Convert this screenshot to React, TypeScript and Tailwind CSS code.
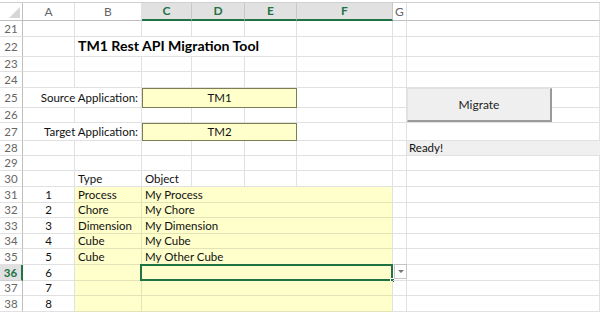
import React from 'react';

const GRID = 'grid grid-cols-[23px_52px_67px_50px_53px_52px_96px_14px_1fr]';
const CELL = 'border-r border-b border-[#e1e1e1]';
const YEL = 'bg-[#ffffcc] border-r border-b border-[#e3e3b8]';

const RowHead: React.FC<{ n: number; active?: boolean }> = ({ n, active }) => (
  <div
    className={`flex items-center justify-center border-b text-[11.5px] ${
      active
        ? 'bg-[#e1e1e1] border-r-2 border-r-[#217346] border-b-[#d0d0d0] text-[#217346] font-bold'
        : 'bg-white border-r border-r-[#bfbfbf] border-b-[#e1e1e1] text-[#666]'
    }`}
  >
    {n}
  </div>
);

const Empty: React.FC<{ span?: string }> = ({ span = '' }) => <div className={`${CELL} ${span}`} />;

const Row: React.FC<{ n: number; h: string; active?: boolean; children?: React.ReactNode }> = ({ n, h, active, children }) => (
  <div className={`${GRID} ${h}`}>
    <RowHead n={n} active={active} />
    {children}
  </div>
);

const Blank: React.FC<{ n: number; h: string }> = ({ n, h }) => (
  <Row n={n} h={h}>
    {Array.from({ length: 8 }).map((_, i) => (
      <Empty key={i} />
    ))}
  </Row>
);

const items = [
  { n: 31, no: '1', type: 'Process', obj: 'My Process', h: 'h-[16px]' },
  { n: 32, no: '2', type: 'Chore', obj: 'My Chore', h: 'h-[15px]' },
  { n: 33, no: '3', type: 'Dimension', obj: 'My Dimension', h: 'h-[16px]' },
  { n: 34, no: '4', type: 'Cube', obj: 'My Cube', h: 'h-[15px]' },
  { n: 35, no: '5', type: 'Cube', obj: 'My Other Cube', h: 'h-[16px]' },
  { n: 36, no: '6', type: '', obj: '', h: 'h-[16px]' },
  { n: 37, no: '7', type: '', obj: '', h: 'h-[15px]' },
  { n: 38, no: '8', type: '', obj: '', h: 'h-[16px]' },
];

const headers = ['A', 'B', 'C', 'D', 'E', 'F', 'G', ''];

export default function App() {
  return (
    <div className="w-[600px] h-[312px] overflow-hidden bg-white font-[family-name:Lato,sans-serif] text-[11.5px] text-[#111] leading-none relative">
      <div className="h-[3px] border-b border-[#d0d0d0]" />

      {/* column headers */}
      <div className={`${GRID} h-[18px]`}>
        <div className="relative bg-white border-r border-b border-[#bfbfbf]">
          <div className="absolute right-[2px] bottom-[2px] w-0 h-0 border-l-[11px] border-l-transparent border-b-[11px] border-b-[#d6d6d6]" />
        </div>
        {headers.map((c, i) => {
          const on = i >= 2 && i <= 5;
          return (
            <div
              key={i}
              className={`flex items-center justify-center border-r text-[12px] ${
                on
                  ? 'bg-[#e1e1e1] border-r-[#c8c8c8] border-b-2 border-b-[#217346] text-[#217346] font-bold'
                  : 'bg-white border-r-[#e1e1e1] border-b border-b-[#bfbfbf] text-[#666]'
              }`}
            >
              {c}
            </div>
          );
        })}
      </div>

      <Blank n={21} h="h-[16px]" />

      <Row n={22} h="h-[20px]">
        <Empty />
        <div className={`${CELL} col-span-4 flex items-center pl-[3px] text-[14.1px] font-bold text-black whitespace-nowrap`}>
          TM1 Rest API Migration Tool
        </div>
        <Empty />
        <Empty />
        <Empty />
      </Row>

      <Blank n={23} h="h-[15px]" />
      <Blank n={24} h="h-[16px]" />

      <Row n={25} h="h-[20px]">
        <div className={`${CELL} col-span-2 flex items-center justify-end pr-[3px] whitespace-nowrap`}>Source Application:</div>
        <div className="col-span-3 flex items-center justify-center bg-[#ffffcc] border border-[#7d7d55]">TM1</div>
        <Empty />
        <Empty />
        <Empty />
      </Row>

      <Blank n={26} h="h-[15px]" />

      <Row n={27} h="h-[18px]">
        <div className={`${CELL} col-span-2 flex items-center justify-end pr-[3px] whitespace-nowrap`}>Target Application:</div>
        <div className="col-span-3 flex items-center justify-center bg-[#ffffcc] border border-[#7d7d55]">TM2</div>
        <Empty />
        <Empty />
        <Empty />
      </Row>

      <Row n={28} h="h-[15px]">
        {Array.from({ length: 7 }).map((_, i) => (
          <Empty key={i} />
        ))}
        <div className="bg-[#f0f0f0] border-b border-[#e1e1e1] flex items-center pl-[2px]">Ready!</div>
      </Row>

      <Blank n={29} h="h-[15px]" />

      <Row n={30} h="h-[16px]">
        <Empty />
        <div className={`${CELL} flex items-center pl-[3px]`}>Type</div>
        <div className={`${CELL} flex items-center pl-[3px] whitespace-nowrap`}>Object</div>
        <Empty />
        <Empty />
        <Empty />
        <Empty />
        <Empty />
      </Row>

      {items.map((it) => (
        <Row key={it.n} n={it.n} h={it.h} active={it.n === 36}>
          <div className={`${CELL} flex items-center justify-center`}>{it.no}</div>
          <div className={`${YEL} flex items-center pl-[3px]`}>{it.type}</div>
          <div className={`${YEL} border-r-[#e1e1e1] col-span-4 flex items-center pl-[3px] relative`}>
            {it.obj}
            {it.n === 36 && (
              <>
                <div className="absolute -left-[2px] -top-[1px] -right-[1px] -bottom-[1px] border-2 border-[#217346]" />
                <div className="absolute -right-[3px] -bottom-[3px] w-[5px] h-[5px] bg-[#217346] border border-white" />
              </>
            )}
          </div>
          <div className={`${CELL} relative`}>
            {it.n === 36 && (
              <div className="absolute left-[1px] -top-[1px] w-[13px] h-[15px] bg-white border border-[#c6c6c6] flex items-center justify-center">
                <div className="w-0 h-0 border-l-[3px] border-r-[3px] border-t-[3px] border-l-transparent border-r-transparent border-t-[#777]" />
              </div>
            )}
          </div>
          <Empty />
        </Row>
      ))}

      {/* form button floating over the sheet */}
      <button className="absolute left-[407px] top-[88px] w-[145px] h-[34px] bg-[#efefef] border border-[#e2e2e2] border-r-2 border-r-[#9a9a9a] border-b-2 border-b-[#9a9a9a] text-[12px] text-[#222] flex items-center justify-center">
        Migrate
      </button>
    </div>
  );
}
